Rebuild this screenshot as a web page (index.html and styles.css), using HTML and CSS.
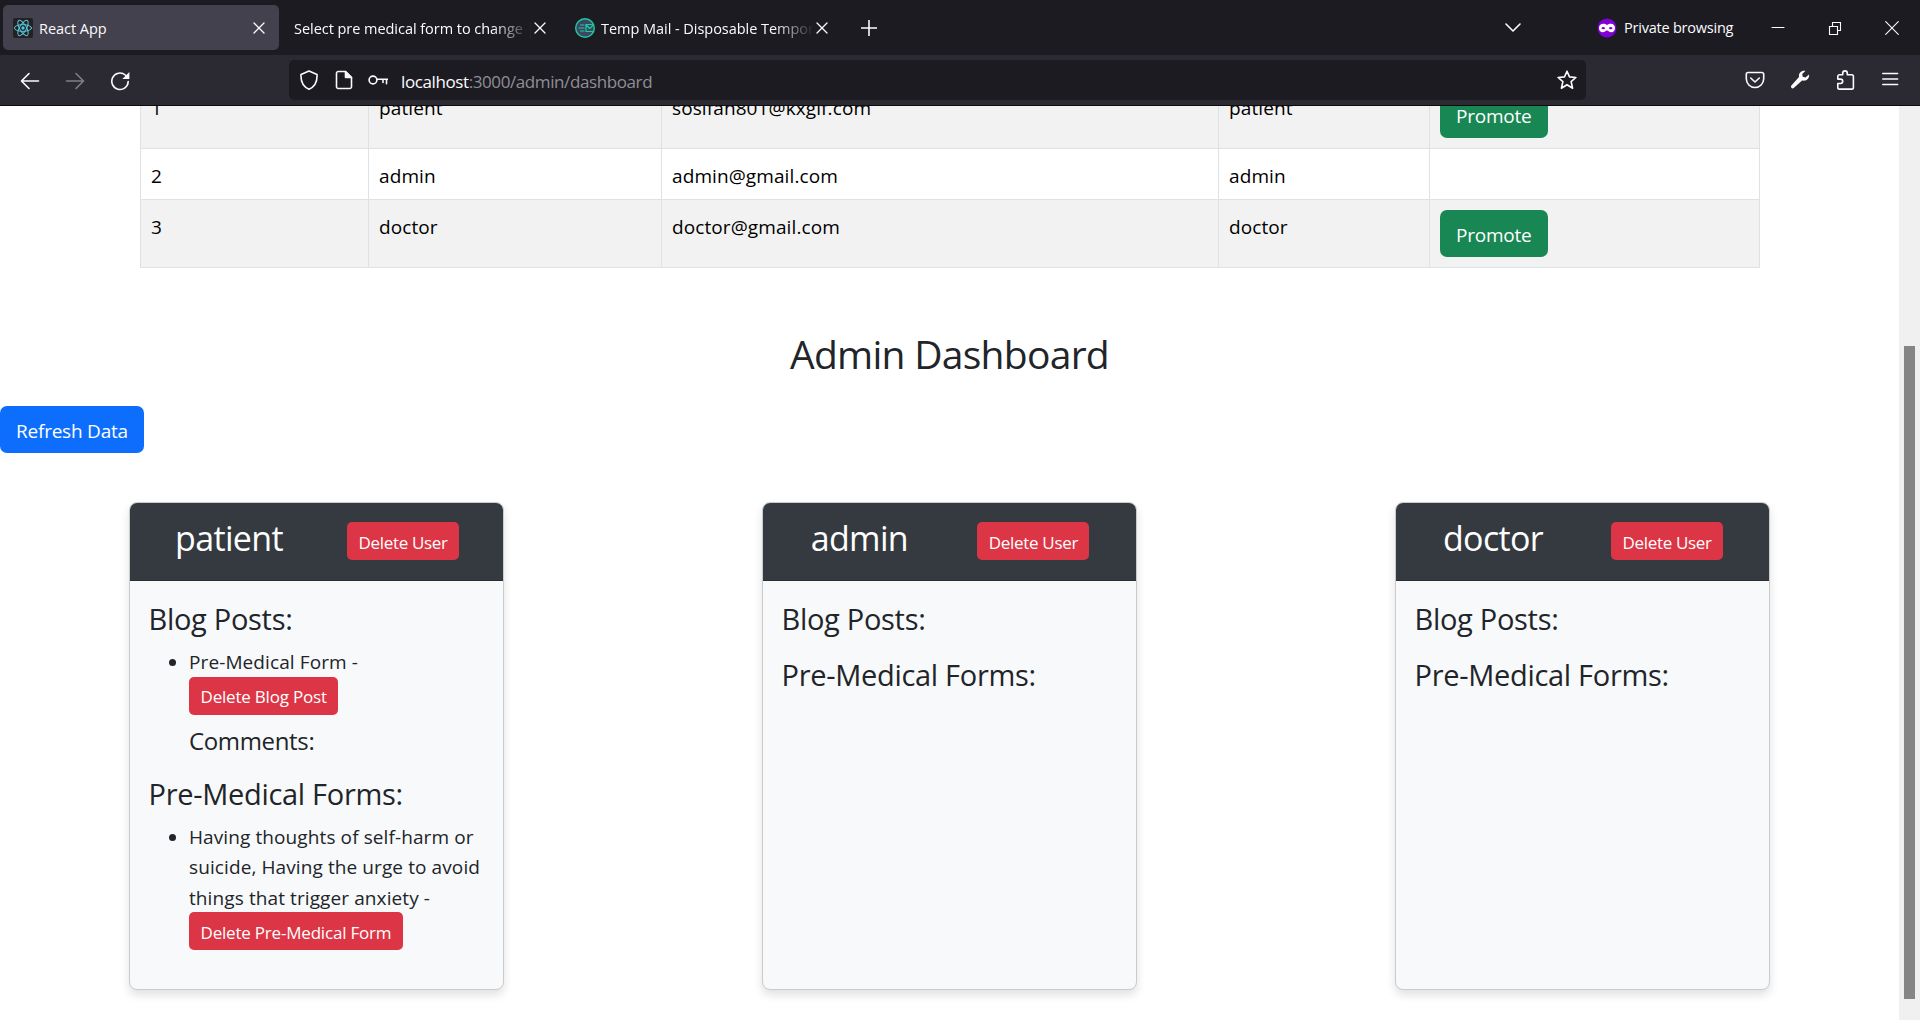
FILE: index.html
```html
<!DOCTYPE html>
<html lang="en">
<head>
<meta charset="utf-8">
<title>React App</title>
<link rel="stylesheet" href="styles.css">
</head>
<body>
<header class="tabs">
  <div class="tab active">
    <svg class="favicon" viewBox="0 0 20 20"><rect width="20" height="20" rx="2" fill="#222"/><g fill="none" stroke="#58c4dc" stroke-width="1"><ellipse cx="10" cy="10" rx="8.6" ry="3.4"/><ellipse cx="10" cy="10" rx="8.6" ry="3.4" transform="rotate(60 10 10)"/><ellipse cx="10" cy="10" rx="8.6" ry="3.4" transform="rotate(120 10 10)"/></g><circle cx="10" cy="10" r="1.7" fill="#58c4dc"/></svg>
    <span class="tab-title">React App</span>
    <svg class="tab-close" viewBox="0 0 12 12"><path d="M1 1l10 10M11 1L1 11"/></svg>
  </div>
  <div class="tab second">
    <span class="tab-title fade">Select pre medical form to change |</span>
    <svg class="tab-close" viewBox="0 0 12 12"><path d="M1 1l10 10M11 1L1 11"/></svg>
  </div>
  <div class="tab third">
    <svg class="favicon" viewBox="0 0 20 20"><circle cx="10" cy="10" r="9.3" fill="#3d4663" stroke="#1ecb9c" stroke-width="1.4"/><path d="M11 6.500h6.500M11 6.500l3.500 4 3.500-3M11 6.500v7h7M5.500 7H9M4 10h5M5.500 13H9" fill="none" stroke="#1ecb9c" stroke-width="1.200"/></svg>
    <span class="tab-title fade">Temp Mail - Disposable Tempor</span>
    <svg class="tab-close" viewBox="0 0 12 12"><path d="M1 1l10 10M11 1L1 11"/></svg>
  </div>
  <svg class="new-tab" viewBox="0 0 16 16"><path d="M8 .5v15M.5 8h15"/></svg>
  <svg class="all-tabs" viewBox="0 0 16 10"><path d="M1 1l7 7 7-7"/></svg>
  <div class="private">
    <svg class="mask" viewBox="0 0 20 20"><circle cx="10" cy="10" r="9.400" fill="#8000d7"/><path fill="#fff" fill-rule="evenodd" d="M10 7.100C8.900 6 7.600 5.800 6.200 5.800 3.600 5.800 2 7.600 2 10s1.400 4.200 3.700 4.200c2 0 2.800-1.800 4.300-1.800s2.300 1.800 4.300 1.800C16.600 14.200 18 12.400 18 10s-1.600-4.200-4.200-4.200c-1.400 0-2.700.2-3.800 1.300zM4.300 10.200c.8-1.300 2.900-1.500 3.900-.2-.6 1.400-2.900 1.800-3.900.2zm7.500-.2c1-1.300 3.100-1.100 3.900.2-1 1.600-3.300 1.200-3.900-.2z"/></svg>
    <span>Private browsing</span>
  </div>
  <div class="window-buttons">
    <svg viewBox="0 0 14 14"><path d="M1 6.500h12"/></svg>
    <svg viewBox="0 0 14 14"><path d="M1.500 5.500h8v8h-8zM4.500 5.500v-4h8v8h-3"/></svg>
    <svg viewBox="0 0 14 14"><path d="M.7.700l12.600 12.600M13.300.7L.7 13.300"/></svg>
  </div>
</header>
<nav class="toolbar">
  <div class="nav-buttons">
    <svg viewBox="0 0 20 20"><path d="M18.500 10H2M9 2.500L1.500 10 9 17.500"/></svg>
    <svg class="disabled" viewBox="0 0 20 20"><path d="M1.500 10H18M11 2.500l7.500 7.500-7.500 7.500"/></svg>
    <svg viewBox="0 0 20 20"><path d="M18.200 10.500A8.200 8.200 0 1 1 15.300 4l1 1"/><path class="solid-flat" d="M19.400 1v7h-7z"/></svg>
  </div>
  <div class="urlbar">
    <svg class="i-shield" viewBox="0 0 20 20"><path d="M10 1L2 4.400C1.600 11 4 16.500 10 19.200 16 16.500 18.400 11 18 4.400z"/></svg>
    <svg class="i-doc" viewBox="0 0 20 20"><path d="M11.500 1.500H4.300a1.800 1.800 0 0 0-1.800 1.800v13.400a1.800 1.800 0 0 0 1.800 1.800h11.400a1.800 1.800 0 0 0 1.800-1.800V7.500z"/><path class="solid" d="M11.500 1.500v6h6z"/></svg>
    <svg class="i-key" viewBox="0 0 20 20"><circle cx="5" cy="10" r="3.900"/><path d="M9 9.200h10.500M18.500 9.200v4.500M15 9.200v3.200"/></svg>
    <span class="url"><b>localhost</b>:3000/admin/dashboard</span>
    <svg class="i-star" viewBox="0 0 20 20"><path d="M10 1.200l2.500 5.700 6.400.6-4.800 4.100 1.500 6.600L10 14.700l-5.600 3.500 1.500-6.600L1.100 7.500l6.400-.6z"/></svg>
  </div>
  <div class="actions">
    <svg viewBox="0 0 20 20"><path d="M3 2.500h14a1.700 1.700 0 0 1 1.700 1.700v4.600a8.700 8.700 0 0 1-17.400 0V4.200A1.700 1.700 0 0 1 3 2.500z"/><path d="M5.700 8l4.300 4 4.300-4"/></svg>
    <svg viewBox="0 0 20 20"><path class="solid-flat" d="M19 4.600l-3.500 2.900-2.800-.7-.5-2.800 3.200-3C11.900.2 8.400 2.700 9 6.900L1.200 15.800c-1 1.400 1.100 3.500 2.500 2.300l8.400-7.500c4.800.9 7.600-2.400 6.900-6z"/></svg>
    <svg viewBox="0 0 20 20"><path d="M7.700 4.700V3.200a2.300 2.300 0 0 1 4.600 0v1.500h4.400a1.700 1.700 0 0 1 1.700 1.700v11a1.700 1.700 0 0 1-1.700 1.700H4.500a1.700 1.700 0 0 1-1.700-1.700v-3.900h2.700a2.200 2.200 0 0 0 0-4.400H2.800V6.400a1.700 1.700 0 0 1 1.700-1.700z"/></svg>
    <svg viewBox="0 0 20 20"><path d="M2.800 3.500h14.800M2.800 9h14.800M2.800 14.500h14.800"/></svg>
  </div>
</nav>
<div class="viewport">
  <main class="page">
    <table class="users">
      <colgroup><col class="c-id"><col class="c-name"><col class="c-mail"><col class="c-role"><col class="c-action"></colgroup>
      <tbody>
        <tr class="striped"><td>1</td><td>patient</td><td>sosifan801@kxgif.com</td><td>patient</td><td><button class="btn success">Promote</button></td></tr>
        <tr><td>2</td><td>admin</td><td>admin@gmail.com</td><td>admin</td><td></td></tr>
        <tr class="striped"><td>3</td><td>doctor</td><td>doctor@gmail.com</td><td>doctor</td><td><button class="btn success">Promote</button></td></tr>
      </tbody>
    </table>
    <h1>Admin Dashboard</h1>
    <button class="btn primary">Refresh Data</button>
    <section class="cards">
      <article class="card">
        <header><h2>patient</h2><button class="btn danger">Delete User</button></header>
        <div class="card-body">
          <h3>Blog Posts:</h3>
          <ul><li>Pre-Medical Form -<br><button class="btn danger">Delete Blog Post</button><h4>Comments:</h4></li></ul>
          <h3>Pre-Medical Forms:</h3>
          <ul><li>Having thoughts of self-harm or suicide, Having the urge to avoid things that trigger anxiety -<br><button class="btn danger">Delete Pre-Medical Form</button></li></ul>
        </div>
      </article>
      <article class="card">
        <header><h2>admin</h2><button class="btn danger">Delete User</button></header>
        <div class="card-body"><h3>Blog Posts:</h3><h3>Pre-Medical Forms:</h3></div>
      </article>
      <article class="card">
        <header><h2>doctor</h2><button class="btn danger">Delete User</button></header>
        <div class="card-body"><h3>Blog Posts:</h3><h3>Pre-Medical Forms:</h3></div>
      </article>
    </section>
  </main>
  <div class="scrollbar"><div class="thumb"></div></div>
</div>
</body>
</html>
```
FILE: styles.css
```css
* { box-sizing: border-box; }
body { margin: 0; width: 1920px; height: 1020px; overflow: hidden; display: flex; flex-direction: column; background: #fff; font-family: "Open Sans", sans-serif; }
svg { flex: none; fill: none; stroke: #fbfbfe; stroke-width: 1.6; stroke-linejoin: round; stroke-linecap: round; }
.favicon, .mask { stroke: none; }
.solid { fill: #fbfbfe; }
.solid-flat { fill: #fbfbfe; stroke: none; }

/* Browser tab strip */
.tabs { height: 55px; flex: none; display: flex; align-items: center; background: #1c1b22; color: #fbfbfe; font-size: 14.5px; letter-spacing: -.04px; }
.tab { height: 45px; display: flex; align-items: center; border-radius: 5px; }
.tab.active { width: 276px; margin-left: 3px; padding: 0 14px 0 10px; background: #42414d; }
.tab.second { width: 281px; padding: 0 14px 0 15px; }
.tab.third { width: 281px; padding: 0 13px 0 15px; }
.favicon { width: 20px; height: 20px; margin-right: 6px; }
.tab-title { flex: 1; min-width: 0; padding-top: 1px; white-space: nowrap; overflow: hidden; }
.fade { -webkit-mask-image: linear-gradient(to left, transparent 0, #000 40px); mask-image: linear-gradient(to left, transparent 0, #000 40px); }
.tab-close { width: 12px; height: 12px; stroke-width: 1.3; margin-left: 2px; }
.new-tab { width: 16px; height: 16px; margin-left: 20px; }
.all-tabs { width: 16px; height: 10px; margin-left: 628px; }
.private { width: 136px; display: flex; align-items: center; gap: 7px; margin-left: 76px; letter-spacing: -.22px; white-space: nowrap; }
.mask { width: 20px; height: 20px; }
.window-buttons { display: flex; gap: 43px; margin-left: 38px; }
.window-buttons svg { width: 14px; height: 14px; stroke-width: 1.1; stroke-linejoin: miter; }

/* Address bar row */
.toolbar { height: 51px; flex: none; display: flex; padding-top: 5px; background: #2b2a33; border-bottom: 1px solid #0c0c0d; }
.nav-buttons { width: 289px; height: 42px; display: flex; align-items: center; gap: 25px; padding-left: 20px; }
.nav-buttons svg, .actions svg { width: 20px; height: 20px; }
.disabled { opacity: .4; }
.urlbar { width: 1297px; height: 40px; display: flex; align-items: center; padding: 0 9px 0 10px; border-radius: 5px; background: #1c1b22; }
.urlbar svg { width: 20px; height: 20px; }
.i-doc { margin-left: 15px; }
.i-key { margin: 0 13px 0 14px; }
.url { padding-top: 2px; color: #8f8f95; font-size: 17px; letter-spacing: -.4px; }
.url b { font-weight: 400; color: #fbfbfe; }
.i-star { margin-left: auto; }
.actions { display: flex; height: 40px; align-items: center; gap: 25px; margin-left: 159px; }

/* Scrolled page content */
.viewport { flex: 1; min-height: 0; display: flex; overflow: hidden; }
.page { width: 1899px; color: #212529; font-size: 19px; line-height: 30.5px; letter-spacing: .1px; margin-top: -26px; }
.users { table-layout: fixed; width: 1619px; margin: 0 0 0 140px; border-collapse: collapse; color: #000; }
.users td { border: 1px solid #dee2e6; height: 51px; padding: 10px 10px 6px; vertical-align: top; line-height: 34px; }
.users .striped td { height: 68px; background: #f2f2f2; }
.c-id { width: 228px; } .c-name { width: 293px; } .c-mail { width: 557px; } .c-role { width: 211px; } .c-action { width: 330px; }
.btn { display: block; height: 47px; padding: 3px 16px 0; border: 0; border-radius: 7px; color: #fff; font: inherit; line-height: 30px; letter-spacing: -.22px; white-space: nowrap; }
.success { background: #198754; }
.primary { background: #0d6efd; }
.danger { height: 38px; padding: 3px 11.5px 0; border-radius: 5px; background: #dc3545; font-size: 17px; letter-spacing: -.2px; }
h1, h2, h3, h4 { margin: 0; font-weight: 400; }
h1 { margin-top: 58px; font-size: 39px; line-height: 56px; text-align: center; letter-spacing: -.72px; }
.page > .primary { margin-top: 24px; }
.cards { display: grid; grid-template-columns: repeat(3, 1fr); justify-items: center; margin-top: 49px; }
.card { width: 375px; height: 488px; border: 1px solid #c9cbcd; border-radius: 8px; background: #f8f9fa; box-shadow: 0 5px 10px rgba(0, 0, 0, .12); overflow: hidden; }
.card header { height: 78px; display: flex; justify-content: space-around; align-items: flex-start; padding: 19px 12px 0 13px; background: #343a40; color: #fff; border-bottom: 1px solid #292e33; }
.card header .danger { width: 112px; letter-spacing: -.32px; padding-top: 4px; }
h2 { margin-top: -3px; font-size: 34px; line-height: 38px; letter-spacing: -.65px; }
.card-body { padding: 20px 18px 20px 18.5px; }
h3 { font-size: 29px; line-height: 36px; margin-bottom: 20px; letter-spacing: -.3px; }
ul { margin: -10px 0 20px; padding-left: 40.5px; }
li .danger { margin: -1px 0 1px; }
h4 { margin-top: 11px; font-size: 24px; line-height: 30px; letter-spacing: -.35px; }
.scrollbar { width: 21px; background: #f0f0f0; }
.thumb { width: 11px; height: 653px; margin: 240px 0 0 5px; background: #858585; }
```
